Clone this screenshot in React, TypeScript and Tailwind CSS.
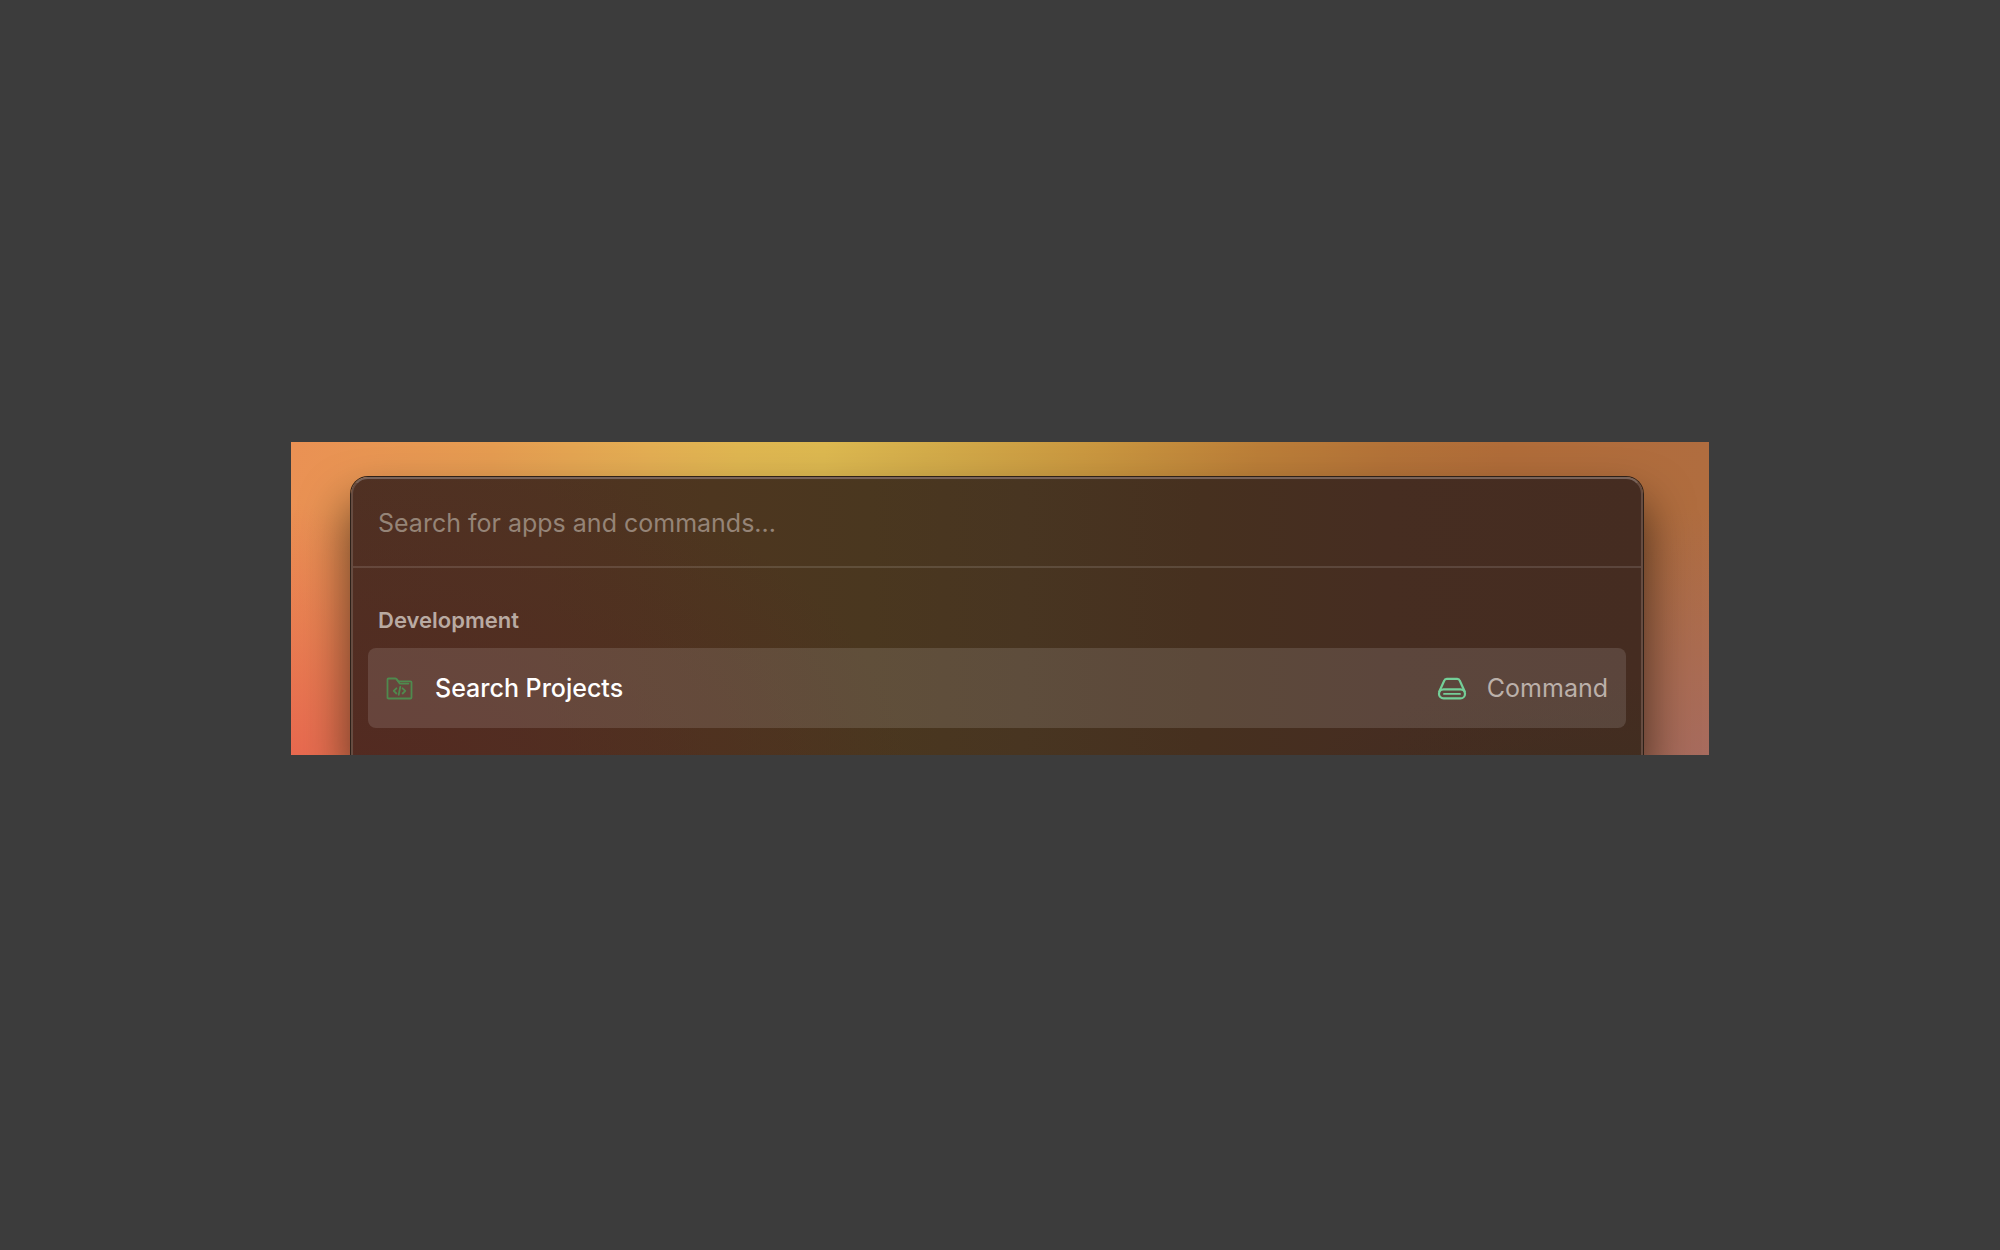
function ProjectFolderIcon() {
  return (
    <svg aria-hidden="true" viewBox="0 0 28 28" className="size-7 shrink-0" fill="none" stroke="#4f8a4e" strokeWidth="1.8" strokeLinecap="round" strokeLinejoin="round">
      <path d="M2.5 23V4.500a1 1 0 0 1 1-1h6.600a2 2 0 0 1 1.500.7l1.800 2.100h12.100a1 1 0 0 1 1 1V22.500a1 1 0 0 1-1 1H3.500a1 1 0 0 1-1-1" />
      <path d="M11.800 4.400l2.900 4.200h8.700" />
      <path d="M11.400 13.300l-2.700 2.600 2.700 2.600M17.600 13.300l2.700 2.600-2.700 2.600M15.300 11.800l-1.600 8" />
    </svg>
  );
}

function DriveIcon() {
  return (
    <svg aria-hidden="true" viewBox="0 0 30 24" className="h-6 w-[30px] shrink-0" fill="none" stroke="#74cf98" strokeWidth="2.2" strokeLinecap="round" strokeLinejoin="round">
      <path d="M2.300 14.500L7.200 3.800A2.800 2.800 0 0 1 9.800 1.800h10.400a2.800 2.800 0 0 1 2.600 2L27.700 14.500" />
      <rect x="2" y="12.300" width="26" height="9.100" rx="4.500" />
      <path d="M7 16.900h16" strokeWidth="1.800" />
    </svg>
  );
}

export default function App() {
  return (
    <div className="flex min-h-screen flex-col items-center bg-[#3c3c3c] pt-[442px] font-['Inter',sans-serif]">
      <main className="w-full max-w-[1418px] overflow-hidden bg-[radial-gradient(ellipse_170px_290px_at_0%_112%,#e8634f_0%,#e8634f99_40%,#e8634f00_100%),radial-gradient(ellipse_200px_280px_at_100%_110%,#a66b62_0%,#a66b6299_40%,#a66b6200_100%),linear-gradient(95deg,#ea9154_0%,#e59c51_14%,#e3ae53_25%,#dfb651_31%,#dcb850_37%,#d3ac4a_44%,#c9963f_56%,#bb7e38_67%,#b37238_76%,#b06c39_84%,#b06d40_100%)] pt-[35px] pr-[66px] pl-[60px]">
        <section
          aria-label="Command launcher"
          className="rounded-t-[17px] border-2 border-b-0 border-[#664c41] border-t-[#78635a] bg-[radial-gradient(ellipse_560px_340px_at_0%_110%,#532a21_0%,#532a2100_100%),radial-gradient(ellipse_360px_120px_at_100%_115%,#402e20_0%,#402e2000_100%),linear-gradient(to_right,#4f3123_0%,#4f3321_15%,#4d361f_28%,#4a371f_40%,#483521_52%,#46301f_66%,#462d21_80%,#452c21_100%)] bg-origin-border shadow-[0_0_0_1px_#2d2018,0_28px_46px_4px_#0000008c]"
        >
          <div className="h-[89px] border-b-2 border-white/12 pl-[25px]">
            <input
              type="text"
              aria-label="Search for apps and commands"
              placeholder="Search for apps and commands..."
              className="block h-[87px] w-full bg-transparent pt-px text-[25px] text-white outline-none placeholder:text-[#958477]"
            />
          </div>
          <div className="px-[15px] pt-[37px] pb-[27px]">
            <h2 className="mb-[13px] pl-[10px] text-[22px] leading-[30px] font-semibold text-[#b9aaa2]">Development</h2>
            <button type="button" className="flex h-20 w-full items-center rounded-lg bg-white/12 pt-0.5 pr-[18px] pl-[17px] text-left text-[25px]">
              <ProjectFolderIcon />
              <span className="ml-[22px] font-medium text-white">Search Projects</span>
              <span className="ml-auto flex items-center gap-5 text-[#bbb0aa]">
                <DriveIcon />
                Command
              </span>
            </button>
          </div>
        </section>
      </main>
    </div>
  );
}
